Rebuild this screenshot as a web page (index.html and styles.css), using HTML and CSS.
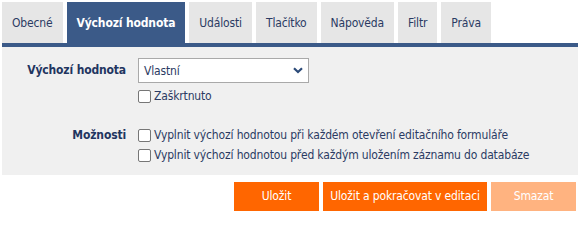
FILE: index.html
```html
<!DOCTYPE html>
<html lang="cs">
<head>
<meta charset="utf-8">
<link rel="stylesheet" href="styles.css">
</head>
<body>
<div class="page">
  <div class="tabbar">
    <div class="tab">Obecné</div>
    <div class="tab active">Výchozí hodnota</div>
    <div class="tab">Události</div>
    <div class="tab">Tlačítko</div>
    <div class="tab">Nápověda</div>
    <div class="tab">Filtr</div>
    <div class="tab">Práva</div>
  </div>
  <div class="panel">
    <div class="row">
      <div class="label label-select">Výchozí hodnota</div>
      <div class="controls">
        <div class="select">
          <span>Vlastní</span>
          <svg class="chev" width="10" height="7" viewBox="0 0 10 7"><path d="M1 1.2 L5 5 L9 1.2" fill="none" stroke="#2b4a78" stroke-width="2.2"/></svg>
        </div>
        <label class="check"><span class="box"></span>Zaškrtnuto</label>
      </div>
    </div>
    <div class="row row-opts">
      <div class="label label-opts">Možnosti</div>
      <div class="controls">
        <label class="check"><span class="box"></span>Vyplnit výchozí hodnotou při každém otevření editačního formuláře</label>
        <label class="check"><span class="box"></span>Vyplnit výchozí hodnotou před každým uložením záznamu do databáze</label>
      </div>
    </div>
  </div>
  <div class="buttons">
    <div class="btn btn-save">Uložit</div>
    <div class="btn btn-cont">Uložit a pokračovat v editaci</div>
    <div class="btn btn-del">Smazat</div>
  </div>
</div>
</body>
</html>
```
FILE: styles.css
```css
html, body {
  margin: 0;
  padding: 0;
  background: #ffffff;
}
body {
  font-family: "DejaVu Sans Condensed", "DejaVu Sans", sans-serif;
  font-stretch: condensed;
  font-size: 12px;
  letter-spacing: -0.15px;
  color: #2b3b63;
}
.page {
  padding: 2px 0 0 2px;
}
.tabbar {
  display: flex;
  gap: 4px;
  border-bottom: 4px solid #3b5a88;
}
.tab {
  height: 41px;
  line-height: 43px;
  padding: 0 10px;
  background: #e6e6e6;
  color: #2b3b63;
  white-space: nowrap;
}
.tab.active {
  background: #3b5a88;
  color: #ffffff;
  font-weight: bold;
}
.panel {
  background: #f0f0f0;
  padding: 11px 0 10px 0;
}
.row {
  display: flex;
  gap: 12px;
}
.row-opts {
  margin-top: 19px;
}
.label {
  width: 124px;
  text-align: right;
  font-weight: bold;
  color: #1f3560;
  flex: none;
}
.label-select {
  line-height: 25px;
}
.label-opts {
  line-height: 20px;
}
.controls {
  display: flex;
  flex-direction: column;
}
.select {
  height: 23px;
  border: 1px solid #a9a9a9;
  background: #ffffff;
  display: flex;
  align-items: center;
  justify-content: space-between;
  padding: 0 5px 0 5px;
  box-sizing: content-box;
  width: 159px;
  color: #2b3b63;
  margin-bottom: 3px;
}
.chev {
  display: block;
}
.check {
  display: flex;
  align-items: center;
  height: 20px;
  white-space: nowrap;
}
.box {
  width: 11px;
  height: 11px;
  border: 1px solid #767676;
  border-radius: 2px;
  background: #ffffff;
  margin-right: 3px;
  flex: none;
}
.buttons {
  display: flex;
  justify-content: flex-end;
  gap: 4px;
  padding: 7px 2px 0 0;
}
.btn {
  height: 29px;
  line-height: 29px;
  text-align: center;
  color: #ffffff;
  background: #ff6600;
  white-space: nowrap;
}
.btn-save, .btn-del {
  width: 85px;
}
.btn-cont {
  width: 164px;
}
.btn-del {
  background: #ffb380;
}
```
